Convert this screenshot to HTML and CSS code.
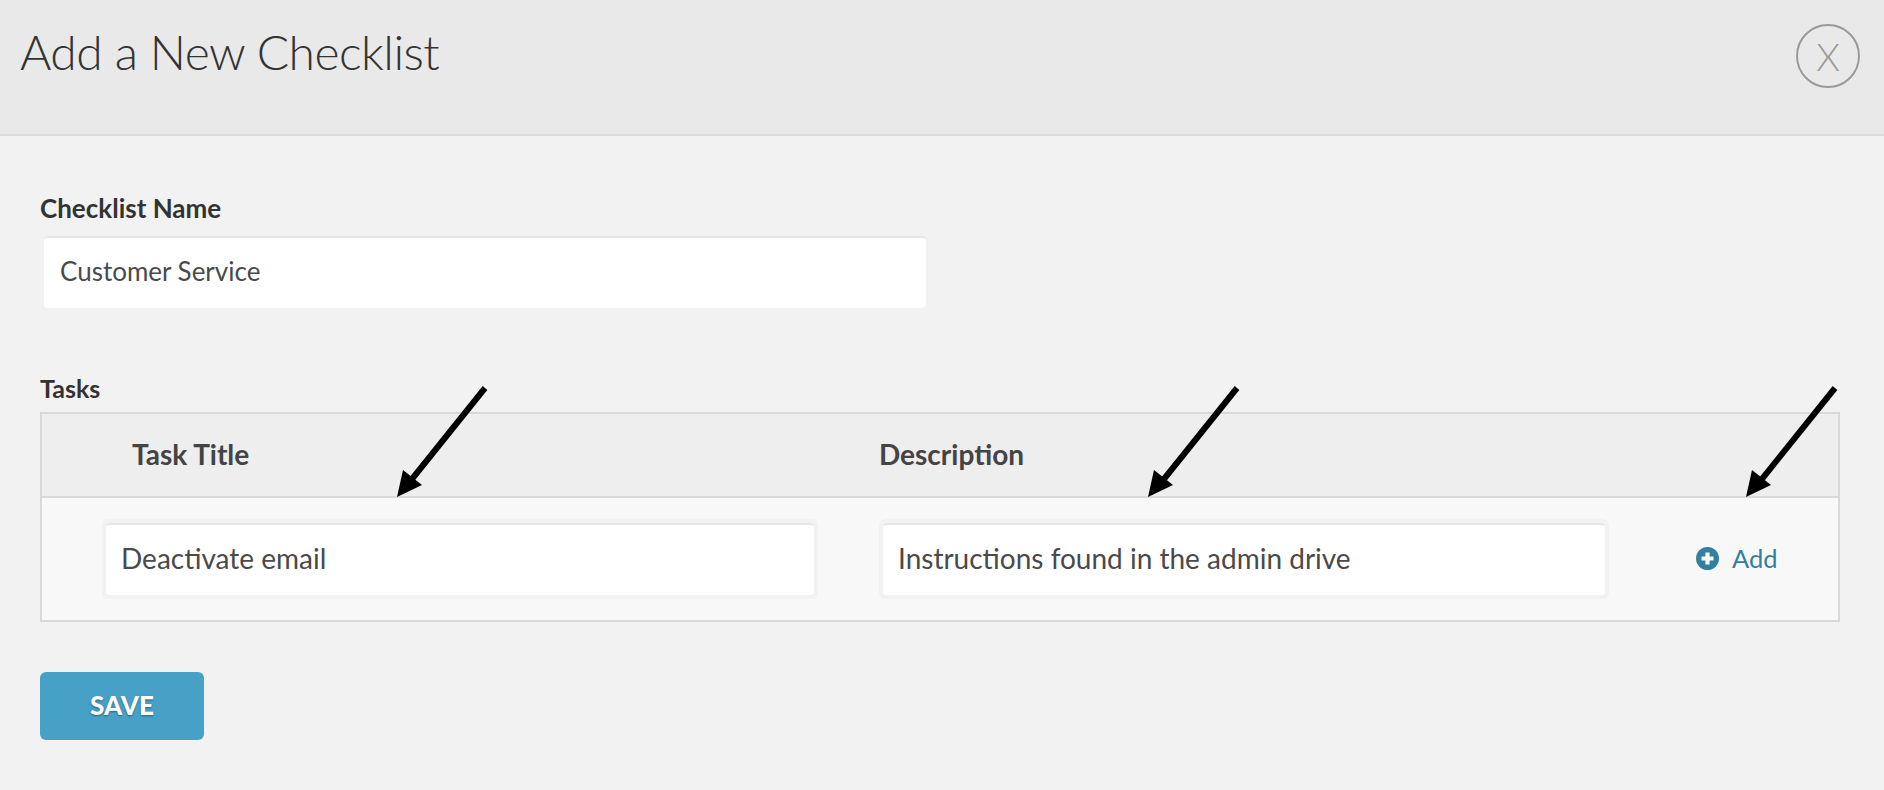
FILE: index.html
```html
<!DOCTYPE html>
<html lang="en">
<head>
<meta charset="utf-8">
<title>Add a New Checklist</title>
<link rel="stylesheet" href="styles.css">
</head>
<body>
<div class="modal">
  <header class="modal-head">
    <h1 class="modal-title">Add a New Checklist</h1>
    <button class="close" type="button">X</button>
  </header>
  <main class="modal-body">
    <label class="field-label">Checklist Name</label>
    <input class="text-input name-input" type="text" value="Customer Service">
    <label class="field-label tasks-label">Tasks</label>
    <section class="tasks">
      <div class="tasks-head">
        <div class="col-title">Task Title</div>
        <div class="col-desc">Description</div>
      </div>
      <div class="tasks-row">
        <span class="ring ring-title"><input class="text-input row-input" type="text" value="Deactivate email"></span>
        <span class="ring ring-desc"><input class="text-input row-input" type="text" value="Instructions found in the admin drive"></span>
        <a class="add" href="#">
          <svg class="add-icon" viewBox="0 0 23 23" aria-hidden="true"><circle cx="11.5" cy="11.5" r="11.5" fill="#337f9d"/><path d="M11.5 5.5v12M5.5 11.5h12" stroke="#f8f8f8" stroke-width="4.2"/></svg>
          <span>Add</span>
        </a>
      </div>
    </section>
    <button class="save" type="button">SAVE</button>
  </main>
  <svg class="arrows" viewBox="0 0 1884 790" aria-hidden="true">
    <g class="arrow">
      <path class="shaft" d="M485 388L408 484"/><path d="M397 497L403 470L422 485Z"/>
    </g>
    <g class="arrow">
      <path class="shaft" d="M1237 388L1160 484"/><path d="M1148 497L1154 470L1173 485Z"/>
    </g>
    <g class="arrow">
      <path class="shaft" d="M1835 388L1758 484"/><path d="M1746 497L1752 470L1771 485Z"/>
    </g>
  </svg>
</div>
</body>
</html>
```
FILE: styles.css
```css
* { box-sizing: border-box; }
html, body { margin: 0; padding: 0; }
body { font-family: Lato, "Liberation Sans", sans-serif; background: #f2f2f2; color: #333; }
.modal { position: relative; width: 1884px; height: 790px; overflow: hidden; background: #f2f2f2; }
.modal-head { height: 136px; background: #e9e9e9; border-bottom: 2px solid #dcdcdc; display: flex; justify-content: space-between; align-items: flex-start; padding: 23px 24px 0 20px; }
.modal-title { margin: 0; font-size: 48px; font-weight: 300; line-height: 58px; letter-spacing: -0.55px; color: #333; }
.close { width: 64px; height: 64px; margin-top: 1px; padding: 0; border: 2px solid #999; border-radius: 50%; background: transparent; color: #999; font-family: Lato, sans-serif; font-size: 38px; font-weight: 300; line-height: 1; }
.modal-body { padding: 57px 44px 0 40px; display: flex; flex-direction: column; align-items: flex-start; }
.field-label { font-size: 26px; font-weight: 700; line-height: 30px; color: #333; }
.text-input { display: block; height: 72px; padding: 0 16px 5px; border: 0; border-top: 2px solid #e6e6e6; border-radius: 4px; background: #fff; font-family: Lato, sans-serif; font-size: 28px; color: #4a4a4a; outline: 0; }
.name-input { width: 882px; margin: 13px 0 0 4px; font-size: 26px; }
.tasks-label { margin-top: 65px; font-size: 25px; }
.tasks { width: 1800px; margin-top: 9px; border: 2px solid #d9d9d9; }
.tasks-head { height: 84px; background: #eee; border-bottom: 2px solid #d9d9d9; display: flex; align-items: center; padding-bottom: 2px; font-size: 28px; font-weight: 700; color: #444; }
.col-title { width: 837px; padding-left: 90px; }
.tasks-row { height: 122px; background: #f8f8f8; display: flex; align-items: center; padding-left: 60px; }
.ring { display: block; padding: 4px; border-radius: 6px; background: #f2f2f2; }
.ring-title { width: 716px; }
.ring-desc { width: 730px; margin-left: 61px; }
.row-input { width: 100%; height: 72px; padding-left: 15px; }
.add { display: flex; align-items: center; margin-left: 87px; gap: 13px; padding-bottom: 2px; color: #337f9d; font-size: 25.5px; text-decoration: none; }
.add-icon { width: 23px; height: 23px; }
.save { width: 164px; height: 68px; margin-top: 50px; border: 0; border-radius: 6px; background: #47a1c6; color: #fff; font-family: Lato, sans-serif; font-size: 26px; font-weight: 900; padding-bottom: 4px; text-shadow: 0 1px 2px rgba(0, 0, 0, .4); }
.arrows { position: absolute; left: 0; top: 0; width: 1884px; height: 790px; pointer-events: none; }
.arrow { fill: #000; }
.shaft { fill: none; stroke: #000; stroke-width: 6; }
```
